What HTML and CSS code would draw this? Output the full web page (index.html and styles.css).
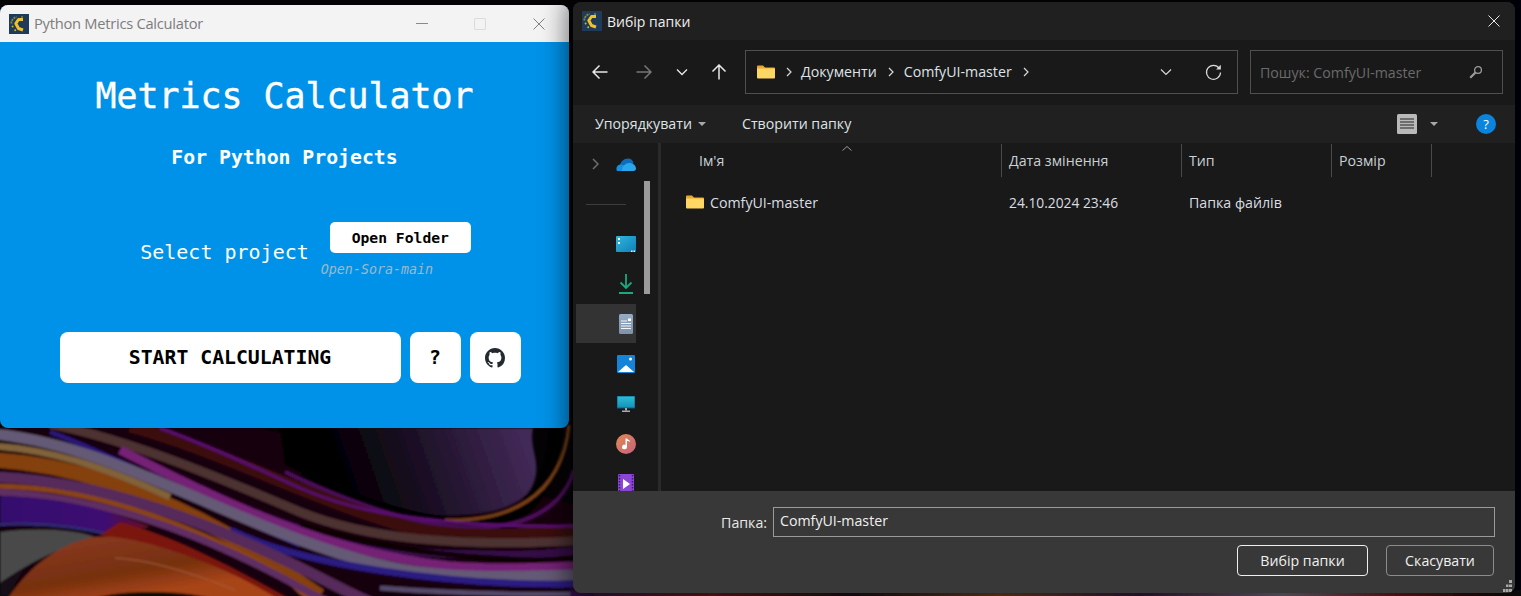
FILE: index.html
```html
<!DOCTYPE html>
<html lang="uk">
<head>
<meta charset="utf-8">
<title>Python Metrics Calculator</title>
<link rel="stylesheet" href="styles.css">
</head>
<body>
<main class="desktop">
  <svg class="wallpaper" viewBox="0 0 1521 596" aria-hidden="true">
    <defs>
      <linearGradient id="blob" gradientUnits="userSpaceOnUse" x1="340" y1="500" x2="525" y2="435"><stop offset="0" stop-color="#000"/><stop offset=".35" stop-color="#150b1c"/><stop offset="1" stop-color="#432a58"/></linearGradient>
      <linearGradient id="violet" gradientUnits="userSpaceOnUse" x1="0" y1="510" x2="150" y2="525"><stop offset="0" stop-color="#35096e"/><stop offset=".7" stop-color="#3d0a72"/><stop offset="1" stop-color="#6a0c20"/></linearGradient>
      <linearGradient id="disc" gradientUnits="userSpaceOnUse" x1="120" y1="535" x2="130" y2="596"><stop offset="0" stop-color="#86381e"/><stop offset=".6" stop-color="#76300f"/><stop offset="1" stop-color="#a84416"/></linearGradient>
      <linearGradient id="strip" gradientUnits="userSpaceOnUse" x1="570" y1="0" x2="1521" y2="0"><stop offset="0" stop-color="#30104a"/><stop offset=".15" stop-color="#6a1a1a"/><stop offset=".3" stop-color="#201018"/><stop offset=".45" stop-color="#70401c"/><stop offset=".6" stop-color="#3a1840"/><stop offset=".75" stop-color="#7a6a80"/><stop offset=".87" stop-color="#701818"/><stop offset="1" stop-color="#0a0a0a"/></linearGradient>
      <filter id="soft"><feGaussianBlur stdDeviation=".8"/></filter>
    </defs>
    <rect class="wall-base" width="1521" height="596"/>
    <g filter="url(#soft)" fill="none">
      <path fill="#170407" d="M0 428H260L600 510V596H0Z"/>
      <path fill="url(#blob)" d="M280 428H533C528 450 545 465 530 490C515 510 480 516 440 515C390 512 340 490 285 465Z"/>
      <path stroke="#060206" stroke-width="14" d="M300 478C380 514 430 524 470 526C525 526 553 490 556 425"/>
      <path stroke="#7a4219" stroke-width="3" d="M445 520C505 522 562 500 569 425"/>
      <path stroke="#4e0d5c" stroke-width="4" d="M285 472C360 508 420 526 470 528C520 528 562 512 574 470"/>
      <path stroke="#3a0808" stroke-width="13" d="M130 426C220 450 330 508 420 530C470 538 520 536 575 530"/>
      <path stroke="#4d3232" stroke-width="9" d="M50 424C130 440 220 478 300 512C365 538 450 547 575 541"/>
      <path stroke="#5c0f72" stroke-width="3" d="M160 428C220 450 260 470 300 488C345 508 420 528 575 526"/>
      <path stroke="#360d46" stroke-width="8" d="M150 470C240 510 340 552 450 554S540 553 575 551"/>
      <path stroke="#080206" stroke-width="5" d="M300 525C380 550 480 562 575 560"/>
      <path stroke="#742076" stroke-width="9" d="M120 450C220 500 320 552 450 566C500 570 540 567 575 566"/>
      <path stroke="#2a1478" stroke-width="5" d="M50 432C130 462 220 512 300 545"/>
      <path stroke="#84400f" stroke-width="15" d="M-5 460C80 465 150 495 200 520S280 570 320 596"/>
      <path stroke="#80623a" stroke-width="7" d="M-5 446C50 450 100 465 170 497"/>
      <path stroke="#655a76" stroke-width="11" d="M-5 434C100 445 190 500 300 540S450 578 575 575"/>
      <path stroke="#2a1a80" stroke-width="7" d="M230 530C300 565 450 586 575 584"/>
      <path stroke="#54486a" stroke-width="5" d="M380 588C460 594 520 595 575 594"/>
      <path stroke="#572a5a" stroke-width="11" d="M-5 477C80 480 170 510 240 540S340 590 370 602"/>
      <path stroke="#8a4515" stroke-width="5" d="M-5 486C70 487 150 510 225 545S290 585 310 600"/>
      <path stroke="#5f2d62" stroke-width="7" d="M-5 492C80 495 160 520 230 552S300 590 330 602"/>
      <path fill="url(#violet)" d="M0 496C60 497 110 510 150 527L100 534C60 524 30 522 0 523Z"/>
      <path stroke="#2f2a70" stroke-width="3" d="M-5 525C40 522 90 525 175 552S240 585 260 600"/>
      <path fill="#7a1410" d="M120 522C170 535 230 565 295 602H250C200 565 150 545 100 535Z"/>
      <path fill="#484848" d="M0 532C40 527 75 530 95 537C60 548 30 562 0 583Z"/>
      <path fill="#151015" d="M0 583L24 568L8 596H0Z"/>
      <path fill="url(#disc)" d="M8 598C30 565 60 543 95 537C130 532 220 562 280 600Z"/>
      <path stroke="#a0603f" stroke-width="1" d="M115 558C150 560 190 572 235 590"/>
      <path fill="#0d0806" d="M95 598C120 590 180 590 210 598Z"/>
      <rect fill="url(#strip)" x="570" y="590" width="951" height="8"/>
      <rect fill="#060608" x="1512" y="0" width="9" height="590"/>
    </g>
  </svg>

  <section class="window app">
    <header class="app-title">
      <svg class="logo" viewBox="0 0 20 20" aria-hidden="true"><use href="#logo-mark"/></svg>
      <span class="app-name">Python Metrics Calculator</span>
      <div class="controls">
        <span class="ctl-min"></span>
        <span class="ctl-max"></span>
        <svg class="ctl-close" viewBox="0 0 12 12" aria-hidden="true"><path d="M.5.5l11 11M11.5.5l-11 11"/></svg>
      </div>
    </header>
    <div class="app-body">
      <h1 class="app-h1">Metrics Calculator</h1>
      <h2 class="app-h2">For Python Projects</h2>
      <div class="select-row">
        <span class="select-label">Select project</span>
        <div class="select-col">
          <button class="btn-open">Open Folder</button>
          <em class="project">Open-Sora-main</em>
        </div>
      </div>
      <div class="action-row">
        <button class="btn-big btn-start">START CALCULATING</button>
        <button class="btn-big btn-square">?</button>
        <button class="btn-big btn-square" aria-label="GitHub">
          <svg class="github" viewBox="0 0 16 16" aria-hidden="true"><path d="M8 0C3.58 0 0 3.58 0 8c0 3.54 2.29 6.53 5.47 7.59.4.07.55-.17.55-.38 0-.19-.01-.82-.01-1.49-2.01.37-2.53-.49-2.69-.94-.09-.23-.48-.94-.82-1.13-.28-.15-.68-.52-.01-.53.63-.01 1.08.58 1.23.82.72 1.21 1.87.87 2.33.66.07-.52.28-.87.51-1.07-1.78-.2-3.64-.89-3.64-3.95 0-.87.31-1.59.82-2.15-.08-.2-.36-1.02.08-2.12 0 0 .67-.21 2.2.82.64-.18 1.32-.27 2-.27.68 0 1.36.09 2 .27 1.53-1.04 2.2-.82 2.2-.82.44 1.1.16 1.92.08 2.12.51.56.82 1.27.82 2.15 0 3.07-1.87 3.75-3.65 3.95.29.25.54.73.54 1.48 0 1.07-.01 1.93-.01 2.2 0 .21.15.46.55.38A8.013 8.013 0 0016 8c0-4.42-3.58-8-8-8z"/></svg>
        </button>
      </div>
    </div>
  </section>

  <section class="window dialog">
    <header class="dlg-title">
      <svg class="logo" viewBox="0 0 20 20" aria-hidden="true">
        <g id="logo-mark">
          <rect width="20" height="20" fill="#1e3b5a"/>
          <path d="M2.300 9.500A6.500 6.500 0 0 1 7.500 3" fill="none" stroke="#8d8a3a" stroke-width="1.800" stroke-dasharray="2 .8"/>
          <path d="M14 5.500H9.500L6.800 9.500L9.500 14.500L14 16" fill="none" stroke="#f0c228" stroke-width="3" stroke-linejoin="round"/>
          <circle cx="3.600" cy="12.500" r="1" fill="#d8b028"/><circle cx="6.200" cy="16.200" r="1" fill="#d8b028"/><circle cx="13" cy="3" r=".8" fill="#d8b028"/>
        </g>
      </svg>
      <span class="dlg-name">Вибір папки</span>
      <svg class="dlg-close" viewBox="0 0 12 12" aria-hidden="true"><path d="M.5.5l11 11M11.5.5l-11 11"/></svg>
    </header>

    <nav class="dlg-nav">
      <svg class="nav-ico back" viewBox="0 0 16 16" aria-hidden="true"><path d="M15.500 8H1M7.500 1.500L1 8l6.500 6.500"/></svg>
      <svg class="nav-ico fwd" viewBox="0 0 16 16" aria-hidden="true"><path d="M.5 8H15M8.500 1.500L15 8l-6.500 6.500"/></svg>
      <svg class="nav-ico drop" viewBox="0 0 12 8" aria-hidden="true"><path d="M1 1.500l5 5 5-5"/></svg>
      <svg class="nav-ico up" viewBox="0 0 16 16" aria-hidden="true"><path d="M8 15.500V1M1.500 7.500L8 1l6.500 6.500"/></svg>
      <div class="address">
        <svg class="folder folder-addr" viewBox="0 0 18 14" aria-hidden="true"><use href="#folder-mark"/></svg>
        <svg class="crumb" viewBox="0 0 6 10" aria-hidden="true"><path d="M1 1l4 4-4 4"/></svg>
        <span class="crumb-text">Документи</span>
        <svg class="crumb crumb-mid" viewBox="0 0 6 10" aria-hidden="true"><path d="M1 1l4 4-4 4"/></svg>
        <span class="crumb-text">ComfyUI-master</span>
        <svg class="crumb" viewBox="0 0 6 10" aria-hidden="true"><path d="M1 1l4 4-4 4"/></svg>
        <svg class="addr-drop" viewBox="0 0 12 8" aria-hidden="true"><path d="M1 1.500l5 5 5-5"/></svg>
        <svg class="refresh" viewBox="0 0 17 17" aria-hidden="true"><path d="M14.200 4.300A7 7 0 1 0 15.500 8.500"/><path class="fill" d="M15.800 .8V5.500H11.100Z"/></svg>
      </div>
      <div class="search">
        <span class="search-text">Пошук: ComfyUI-master</span>
        <svg class="search-ico" viewBox="0 0 14 14" aria-hidden="true"><circle cx="9" cy="5" r="3.400"/><path class="thick" d="M6.500 7.500L1.200 12.800"/></svg>
      </div>
    </nav>

    <div class="dlg-cmd">
      <span class="cmd-item">Упорядкувати</span>
      <span class="caret caret-org"></span>
      <span class="cmd-item cmd-new">Створити папку</span>
      <svg class="view-ico" viewBox="0 0 20 20" aria-hidden="true"><rect width="20" height="20" rx="1.500" fill="#b9b9b9"/><path d="M3 5h14M3 8h14M3 11h14M3 14h14" stroke="#222" stroke-width="1.200"/></svg>
      <span class="caret caret-view"></span>
      <span class="help">?</span>
    </div>

    <div class="dlg-main">
      <aside class="side">
        <div class="tree">
          <div class="tree-row">
            <svg class="tree-chev" viewBox="0 0 7 12" aria-hidden="true"><path d="M1 1l5 5-5 5"/></svg>
            <svg class="ti ti-w20" viewBox="0 0 20 13" aria-hidden="true"><path fill="#0f6cbd" d="M4 8C4 4 8 .5 12 .5c3 0 5 2 5.500 4.500L9 11Z"/><path fill="#1490df" d="M1 13C-.5 10 1 6.500 5 6.500l4 1 6 5.500Z"/><path fill="#28a8ea" d="M6 13C6 8 10 4.500 14 5c3 .2 6 2.500 6 5.500 0 1.500-1 2.500-2.500 2.500Z"/></svg>
          </div>
          <div class="tree-row tree-sep"><span class="sep-line"></span></div>
          <div class="tree-row">
            <svg class="ti ti-w20" viewBox="0 0 20 16" aria-hidden="true"><defs><linearGradient id="dk" x1="0" y1="0" x2="1" y2="1"><stop offset="0" stop-color="#2fb6dc"/><stop offset="1" stop-color="#0f7fb8"/></linearGradient></defs><rect width="20" height="16" rx="1" fill="url(#dk)"/><rect x="2" y="2" width="2" height="2" fill="#fff"/><rect x="2" y="6" width="2" height="2" fill="#fff"/><rect x="15" y="14.500" width="1.500" height="1.500" fill="#eee"/><rect x="17.500" y="14.500" width="1.500" height="1.500" fill="#eee"/></svg>
          </div>
          <div class="tree-row">
            <svg class="ti ti-w14" viewBox="0 0 14 20" aria-hidden="true"><path fill="none" stroke="#1aa880" stroke-width="1.800" d="M7 0v14M1.500 8.500L7 14l5.500-5.500"/><rect y="18" width="14" height="2" fill="#1aa880"/></svg>
          </div>
          <div class="tree-row tree-active">
            <svg class="ti ti-w14" viewBox="0 0 14 20" aria-hidden="true"><defs><linearGradient id="dc" x1="0" y1="0" x2="0" y2="1"><stop offset="0" stop-color="#96acc4"/><stop offset="1" stop-color="#7d93ad"/></linearGradient></defs><rect width="14" height="20" rx="1.500" fill="url(#dc)"/><path stroke="#fff" stroke-width=".9" d="M2 7h6M2 9.500h10M2 12h10M2 14.500h10"/><rect x="9" y="4.500" width="3" height="2.500" fill="#fff"/></svg>
          </div>
          <div class="tree-row">
            <svg class="ti ti-w18" viewBox="0 0 18 18" aria-hidden="true"><rect width="18" height="18" rx="1" fill="#1583d8"/><path fill="#fff" d="M1 17L9 10l8 7Z"/><circle cx="13.500" cy="4" r="1.500" fill="#fff"/></svg>
          </div>
          <div class="tree-row">
            <svg class="ti ti-w18" viewBox="0 0 18 16" aria-hidden="true"><defs><linearGradient id="mn" x1="0" y1="0" x2="0" y2="1"><stop offset="0" stop-color="#2bc0d8"/><stop offset="1" stop-color="#1490b8"/></linearGradient></defs><rect width="18" height="12" fill="url(#mn)" stroke="#0f5a86"/><rect x="8" y="12" width="2" height="2.500" fill="#aaa"/><rect x="5" y="14.500" width="8" height="1.500" fill="#aaa"/></svg>
          </div>
          <div class="tree-row">
            <svg class="ti ti-w20" viewBox="0 0 20 20" aria-hidden="true"><defs><linearGradient id="ms" x1="0" y1="0" x2="1" y2="1"><stop offset="0" stop-color="#e08a50"/><stop offset="1" stop-color="#c8607e"/></linearGradient></defs><circle cx="10" cy="10" r="10" fill="url(#ms)"/><path fill="#fff" d="M9.500 4.500h1.500v8.500a2.500 2.300 0 1 1-1.500-2.100ZM11 4.500c1 1.500 3 1.500 3 3.500c-1-1-2-1-3-1Z"/></svg>
          </div>
          <div class="tree-row tree-video">
            <svg class="ti ti-w16" viewBox="0 0 16 20" aria-hidden="true"><rect width="16" height="20" rx="1" fill="#8b46d6"/><path fill="#fff" d="M5 5l7 5-7 5Z"/><path stroke="#3b1a66" stroke-width="1.500" stroke-dasharray="1.500 1.500" d="M1.500 1v18M14.500 1v18"/></svg>
          </div>
        </div>
        <div class="side-thumb"></div>
        <div class="side-split"></div>
      </aside>
      <div class="files">
        <div class="file-head">
          <span class="col col-name">Ім'я<span class="sort-caret"><svg viewBox="0 0 10 5" aria-hidden="true"><path d="M.5 4.500L5 .5l4.500 4"/></svg></span></span>
          <span class="col col-date">Дата змінення</span>
          <span class="col col-type">Тип</span>
          <span class="col col-size">Розмір</span>
        </div>
        <div class="file-row">
          <span class="cell cell-name">
            <svg class="folder" viewBox="0 0 18 14" aria-hidden="true">
              <g id="folder-mark"><path fill="#e8a92e" d="M0 1.500A1 1 0 0 1 1 .5h5l2 2h9a1 1 0 0 1 1 1V5H0Z"/><path fill="#fdd663" d="M0 3.500h17a1 1 0 0 1 1 1v8a1 1 0 0 1-1 1H1a1 1 0 0 1-1-1Z"/></g>
            </svg>
            ComfyUI-master
          </span>
          <span class="cell cell-date">24.10.2024 23:46</span>
          <span class="cell cell-type">Папка файлів</span>
        </div>
      </div>
    </div>

    <footer class="dlg-foot">
      <div class="foot-row">
        <label class="foot-label">Папка:</label>
        <div class="foot-input">ComfyUI-master</div>
      </div>
      <div class="foot-btns">
        <button class="dbtn dbtn-primary">Вибір папки</button>
        <button class="dbtn">Скасувати</button>
      </div>
      <svg class="grip" viewBox="0 0 9 12" aria-hidden="true"><path d="M6 0h3v3H6zM3 4.500h2.500V7H3zM6 4.500h3V7H6zM0 9h2.500v3H0zM3 9h2.500v3H3zM6 9h3v3H6z"/></svg>
    </footer>
  </section>
</main>
</body>
</html>
```
FILE: styles.css
```css
* { box-sizing: border-box; }
html, body { margin: 0; padding: 0; background: #000; }
button { font: inherit; cursor: default; }

.desktop { position: relative; width: 1521px; height: 596px; overflow: hidden; }
.wallpaper { position: absolute; inset: 0; width: 1521px; height: 596px; }
.wall-base { fill: #050306; }

.window { position: absolute; display: flex; flex-direction: column; overflow: hidden; }

/* App window */
.app { left: 0; top: 5px; width: 569px; height: 423px; border-radius: 8px; background: #0092e8; }
.app-title { flex: none; height: 37px; background: #f3f3f3; display: flex; align-items: center; padding-left: 9px; }
.logo { width: 20px; height: 20px; flex: none; }
.app-name { margin: -2px 0 0 5px; font: 14.7px "Open Sans", sans-serif; color: #7d7d7d; letter-spacing: -.26px; }
.controls { margin-left: auto; display: flex; align-items: center; height: 100%; padding-right: 24px; }
.ctl-min { width: 12px; height: 1px; background: #8a8a8a; margin-top: -1px; }
.ctl-max { width: 12px; height: 12px; margin-left: 46px; border: 1px solid #dcdcdc; border-radius: 1px; }
.ctl-close { width: 12px; height: 12px; margin-left: 47px; fill: none; stroke: #808080; stroke-width: 1; }

.app-body { flex: 1; display: flex; flex-direction: column; align-items: center; color: #fff; font-family: "DejaVu Sans Mono", "Liberation Mono", monospace; }
.app-h1 { margin: 34px 0 0; font-size: 34.9px; line-height: 40px; font-weight: 400; -webkit-text-stroke: .4px #fff; }
.app-h2 { margin: 30px 0 0; font-size: 19.8px; line-height: 24px; font-weight: 700; }
.select-row { display: flex; align-items: flex-start; margin-top: 52px; margin-left: 42px; }
.select-label { font-size: 20px; line-height: 24px; margin-top: 18px; }
.select-col { margin-left: 21px; display: flex; flex-direction: column; align-items: flex-start; }
.btn-open { width: 141px; height: 31px; padding: 0; border: 0; border-radius: 5px; background: #fff; color: #000; font-size: 14.7px; font-weight: 700; font-family: inherit; }
.project { margin: 9px 0 0 -9px; font-size: 13.33px; line-height: 16px; color: #9db9ca; }
.action-row { display: flex; gap: 9px; margin-top: 54px; padding-left: 11px; }
.btn-big { height: 51px; padding: 0; border: 0; border-radius: 8px; background: #fff; color: #000; font-family: inherit; font-size: 19.8px; font-weight: 700; display: flex; align-items: center; justify-content: center; }
.btn-start { width: 341px; }
.btn-square { width: 51px; }
.github { width: 20px; height: 20px; fill: #24292f; }

/* Dialog */
.dialog { left: 573px; top: 2px; width: 942px; height: 591px; border-radius: 8px; background: #191919; box-shadow: 0 0 26px 6px rgba(0,0,0,.55); color: #dfe3e6; font: 14.2px "Open Sans", sans-serif; }
.dlg-title { flex: none; height: 38px; background: #202020; display: flex; align-items: center; padding: 0 15px 0 9px; }
.dlg-name { margin-left: 5px; font-size: 14px; color: #f0f0f0; }
.dlg-close { margin-left: auto; width: 12px; height: 12px; fill: none; stroke: #e8e8e8; stroke-width: 1; }

.dlg-nav { flex: none; height: 65px; background: #191919; display: flex; align-items: center; padding: 0 0 1px 19px; }
.nav-ico { flex: none; fill: none; stroke: #e8e8e8; stroke-width: 1.500; }
.back, .fwd { width: 16px; height: 16px; }
.fwd { margin-left: 28px; stroke: #777; }
.drop { width: 12px; height: 8px; margin-left: 24px; stroke-width: 1.300; }
.up { width: 16px; height: 16px; margin-left: 23px; }
.address { flex: none; width: 493px; height: 44px; margin-left: 18px; border: 1px solid #4f4f4f; display: flex; align-items: center; padding-left: 11px; }
.folder { width: 18px; height: 14px; flex: none; }
.crumb { width: 6px; height: 10px; flex: none; margin: 0 9px 0 11px; fill: none; stroke: #d8d8d8; stroke-width: 1.200; }
.crumb-mid { margin-right: 10px; }
.crumb-text { line-height: 18px; }
.addr-drop { width: 12px; height: 8px; margin-left: auto; fill: none; stroke: #d8d8d8; stroke-width: 1.200; }
.refresh { width: 17px; height: 17px; margin: 0 15px 0 33px; fill: none; stroke: #d8d8d8; stroke-width: 1.200; }
.refresh .fill { fill: #d8d8d8; stroke: none; }
.search { flex: none; width: 253px; height: 44px; margin-left: 12px; border: 1px solid #4f4f4f; display: flex; align-items: center; padding: 0 19px 0 9px; justify-content: space-between; }
.search-text { color: #6b6b6b; }
.search-ico { width: 14px; height: 14px; fill: none; stroke: #9b9b9b; stroke-width: 1.300; }
.search-ico .thick { stroke-width: 2.200; }

.dlg-cmd { flex: none; height: 38px; background: #202020; display: flex; align-items: center; padding-left: 22px; }
.cmd-new { margin-left: 36px; }
.cmd-item { line-height: 18px; }
.caret { width: 0; height: 0; border: 4px solid transparent; border-top: 4px solid #a8a8a8; border-bottom: 0; flex: none; }
.caret-org { margin-left: 6px; }
.view-ico { width: 20px; height: 20px; margin-left: auto; flex: none; }
.caret-view { margin-left: 13px; }
.help { width: 20px; height: 20px; margin: 0 19px 0 38px; border-radius: 50%; background: #0a84dc; color: #fff; font-size: 13px; display: flex; align-items: center; justify-content: center; flex: none; }

.dlg-main { flex: 1; min-height: 0; display: flex; overflow: hidden; }
.side { flex: none; width: 88px; display: flex; align-items: flex-start; overflow: hidden; height: 100%; }
.tree { flex: none; width: 60px; margin-left: 3px; padding-top: 1px; display: flex; flex-direction: column; }
.tree-row { height: 40px; flex: none; display: flex; align-items: center; justify-content: flex-end; position: relative; }
.tree-active { background: #333; height: 39px; margin-bottom: 1px; }
.tree-video { align-items: flex-start; padding-top: 10px; }
.tree-sep { justify-content: flex-start; }
.sep-line { width: 40px; height: 1px; margin-left: 10px; background: #3d3d3d; }
.tree-chev { width: 7px; height: 12px; margin-right: 17px; fill: none; stroke: #6e6e6e; stroke-width: 1.500; }
.ti { flex: none; display: block; }
.ti-w20 { width: 20px; height: auto; }
.ti-w18 { width: 18px; height: auto; margin-right: 1px; }
.ti-w16 { width: 16px; height: auto; margin-right: 2px; }
.ti-w14 { width: 14px; height: auto; margin-right: 3px; }
.side-thumb { flex: none; width: 6px; height: 113px; margin: 38px 0 0 8px; background: #9b9b9b; }
.side-split { flex: none; width: 3px; height: 100%; margin-left: 8px; background: #2a2a2a; }

.files { flex: 1; min-width: 0; }
.file-head { height: 33px; padding-top: 1px; display: grid; grid-template-columns: 341px 180px 150px 100px; }
.col { border-right: 1px solid #4a4a4a; padding-left: 7px; line-height: 33px; color: #c9d0d6; position: relative; }
.col-name { padding-left: 38px; }
.sort-caret { position: absolute; left: 181px; top: 2px; width: 10px; height: 5px; line-height: 0; }
.sort-caret svg { width: 10px; height: 5px; fill: none; stroke: #9a9a9a; stroke-width: 1; }
.file-row { display: grid; grid-template-columns: 341px 180px 150px; height: 24px; margin-top: 15px; align-items: center; }
.cell { padding-left: 7px; color: #d9dee3; line-height: 24px; white-space: nowrap; }
.cell-date { font-size: 13.8px; }
.cell-name { padding-left: 25px; display: flex; align-items: center; gap: 6px; }
.cell-name .folder { margin-top: -3px; }

.dlg-foot { flex: none; height: 102px; background: #383838; position: relative; padding: 16px 20px 0 0; }
.foot-row { display: flex; align-items: center; justify-content: flex-end; }
.foot-label { margin-right: 6px; color: #e8e8e8; }
.foot-input { width: 722px; height: 30px; border: 1px solid #9a9a9a; padding: 0 6px; line-height: 26px; color: #f0f0f0; }
.foot-btns { display: flex; justify-content: flex-end; gap: 18px; margin: 8px 1px 0 0; }
.dbtn { width: 108px; height: 31px; padding: 0; border: 1px solid #8c8c8c; border-radius: 4px; background: #383838; color: #f0f0f0; font: inherit; }
.dbtn-primary { width: 131px; border: 1.500px solid #efefef; }
.grip { position: absolute; right: 3px; bottom: 1px; width: 9px; height: 12px; fill: #a8a8a8; }
```
